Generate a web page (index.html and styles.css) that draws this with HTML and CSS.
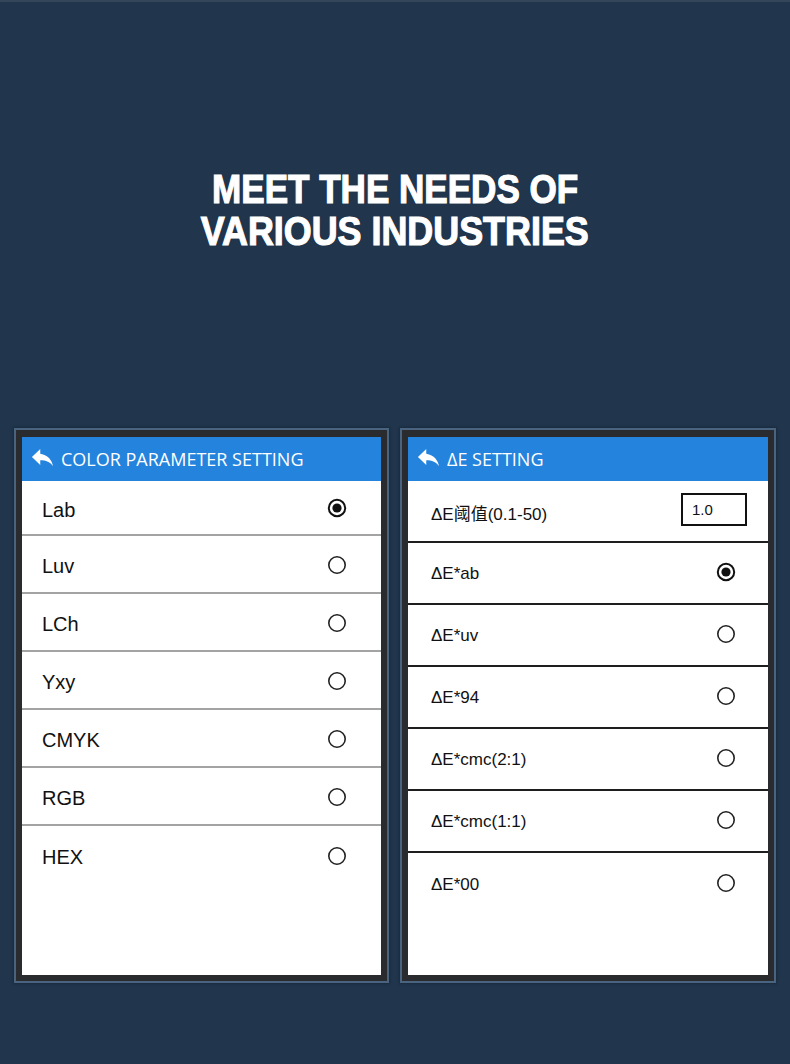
FILE: index.html
```html
<!DOCTYPE html>
<html>
<head>
<meta charset="utf-8">
<link rel="stylesheet" href="styles.css">
</head>
<body>
<div class="page">
  <h1 class="title"><span class="l1">MEET THE NEEDS OF</span><span class="l2">VARIOUS INDUSTRIES</span></h1>
  <div class="panels">
    <div class="device">
      <div class="screen">
        <div class="head">
          <svg class="back" viewBox="0 0 24 24"><path d="M10 8.6V4.5L2.6 11.6l7.4 7.1v-4.2c5.2 0 8.9 1.7 11.4 5.3C20.4 14.7 17.2 9.6 10 8.6z" fill="#fff"/></svg>
          <span>COLOR PARAMETER SETTING</span>
        </div>
        <div class="list gray">
          <div class="row first"><span>Lab</span><svg class="radio" viewBox="0 0 20 20"><circle cx="10" cy="10" r="8.2" fill="none" stroke="#111" stroke-width="2"/><circle cx="10" cy="10" r="4.6" fill="#111"/></svg></div>
          <div class="row"><span>Luv</span><svg class="radio" viewBox="0 0 20 20"><circle cx="10" cy="10" r="8.2" fill="none" stroke="#222" stroke-width="1.6"/></svg></div>
          <div class="row"><span>LCh</span><svg class="radio" viewBox="0 0 20 20"><circle cx="10" cy="10" r="8.2" fill="none" stroke="#222" stroke-width="1.6"/></svg></div>
          <div class="row"><span>Yxy</span><svg class="radio" viewBox="0 0 20 20"><circle cx="10" cy="10" r="8.2" fill="none" stroke="#222" stroke-width="1.6"/></svg></div>
          <div class="row"><span>CMYK</span><svg class="radio" viewBox="0 0 20 20"><circle cx="10" cy="10" r="8.2" fill="none" stroke="#222" stroke-width="1.6"/></svg></div>
          <div class="row"><span>RGB</span><svg class="radio" viewBox="0 0 20 20"><circle cx="10" cy="10" r="8.2" fill="none" stroke="#222" stroke-width="1.6"/></svg></div>
          <div class="row last"><span>HEX</span><svg class="radio" viewBox="0 0 20 20"><circle cx="10" cy="10" r="8.2" fill="none" stroke="#222" stroke-width="1.6"/></svg></div>
        </div>
      </div>
    </div>
    <div class="device">
      <div class="screen">
        <div class="head right">
          <svg class="back" viewBox="0 0 24 24"><path d="M10 8.6V4.5L2.6 11.6l7.4 7.1v-4.2c5.2 0 8.9 1.7 11.4 5.3C20.4 14.7 17.2 9.6 10 8.6z" fill="#fff"/></svg>
          <span>ΔE SETTING</span>
        </div>
        <div class="list dark">
          <div class="row"><span>ΔE阈值(0.1-50)</span><div class="input">1.0</div></div>
          <div class="row"><span>ΔE*ab</span><svg class="radio" viewBox="0 0 20 20"><circle cx="10" cy="10" r="8.2" fill="none" stroke="#111" stroke-width="2"/><circle cx="10" cy="10" r="4.6" fill="#111"/></svg></div>
          <div class="row"><span>ΔE*uv</span><svg class="radio" viewBox="0 0 20 20"><circle cx="10" cy="10" r="8.2" fill="none" stroke="#222" stroke-width="1.6"/></svg></div>
          <div class="row"><span>ΔE*94</span><svg class="radio" viewBox="0 0 20 20"><circle cx="10" cy="10" r="8.2" fill="none" stroke="#222" stroke-width="1.6"/></svg></div>
          <div class="row"><span>ΔE*cmc(2:1)</span><svg class="radio" viewBox="0 0 20 20"><circle cx="10" cy="10" r="8.2" fill="none" stroke="#222" stroke-width="1.6"/></svg></div>
          <div class="row"><span>ΔE*cmc(1:1)</span><svg class="radio" viewBox="0 0 20 20"><circle cx="10" cy="10" r="8.2" fill="none" stroke="#222" stroke-width="1.6"/></svg></div>
          <div class="row last"><span>ΔE*00</span><svg class="radio" viewBox="0 0 20 20"><circle cx="10" cy="10" r="8.2" fill="none" stroke="#222" stroke-width="1.6"/></svg></div>
        </div>
      </div>
    </div>
  </div>
</div>
</body>
</html>
```
FILE: styles.css
```css
html, body {
  margin: 0;
  padding: 0;
  background: #21364d;
}
.page {
  width: 790px;
  height: 1064px;
  box-sizing: border-box;
  border-top: 2px solid #34465a;
  background: #21364d;
  overflow: hidden;
}
.title {
  margin: 0;
  padding-top: 166px;
  display: flex;
  flex-direction: column;
  align-items: center;
  font-family: "Liberation Sans", Arial, sans-serif;
  font-weight: bold;
  font-size: 41px;
  line-height: 42px;
  color: #fff;
  -webkit-text-stroke: 1.2px #fff;
  text-shadow: 0 0 2px rgba(0,0,0,0.35);
}
.title span {
  display: block;
  white-space: nowrap;
}
.title .l1 { transform: scaleX(0.855); }
.title .l2 { transform: scaleX(0.875); }
.panels {
  display: flex;
  gap: 11px;
  padding-left: 14px;
  margin-top: 176px;
}
.device {
  border: 2px solid #4a637e;
  background: #2a2b2e;
  padding: 7px 6px 6px 6px;
  box-shadow: 0 0 2px 1px rgba(20,35,50,0.6);
}
.device:first-child .screen { width: 359px; }
.device:last-child .screen { width: 360px; }
.screen {
  height: 538px;
  background: #fff;
  display: flex;
  flex-direction: column;
}
.head {
  height: 44px;
  flex: none;
  background: #2483dc;
  color: #fff;
  display: flex;
  align-items: center;
  padding-left: 7px;
  gap: 5px;
  font-family: "Open Sans", sans-serif;
  font-size: 18px;
}
.back {
  width: 27px;
  height: 27px;
  flex: none;
  margin-top: -3px;
}
.list .row {
  display: flex;
  align-items: center;
  justify-content: space-between;
  box-sizing: border-box;
  color: #111;
}
.gray .row {
  height: 58px;
  border-bottom: 2px solid #a3a3a3;
  padding: 5px 34px 0 20px;
  font-family: "Liberation Sans", Arial, sans-serif;
  font-size: 20px;
}
.gray .row.first {
  height: 55px;
}
.gray .row .radio {
  margin-top: -4px;
}
.dark .row {
  height: 62px;
  border-bottom: 2px solid #1e1e1e;
  padding: 2px 32px 0 23px;
  font-family: "Liberation Sans", "Noto Sans CJK SC", sans-serif;
  font-size: 17px;
}
.dark .row .radio {
  margin-top: -5px;
}
.list .row.last {
  border-bottom: none;
}
.radio {
  width: 20px;
  height: 20px;
  flex: none;
}
.input {
  width: 66px;
  height: 33px;
  box-sizing: border-box;
  border: 2px solid #111;
  margin-right: -11px;
  margin-top: -5px;
  padding-left: 9px;
  display: flex;
  align-items: center;
  font-family: "Liberation Sans", Arial, sans-serif;
  font-size: 15px;
  color: #111;
}
```
